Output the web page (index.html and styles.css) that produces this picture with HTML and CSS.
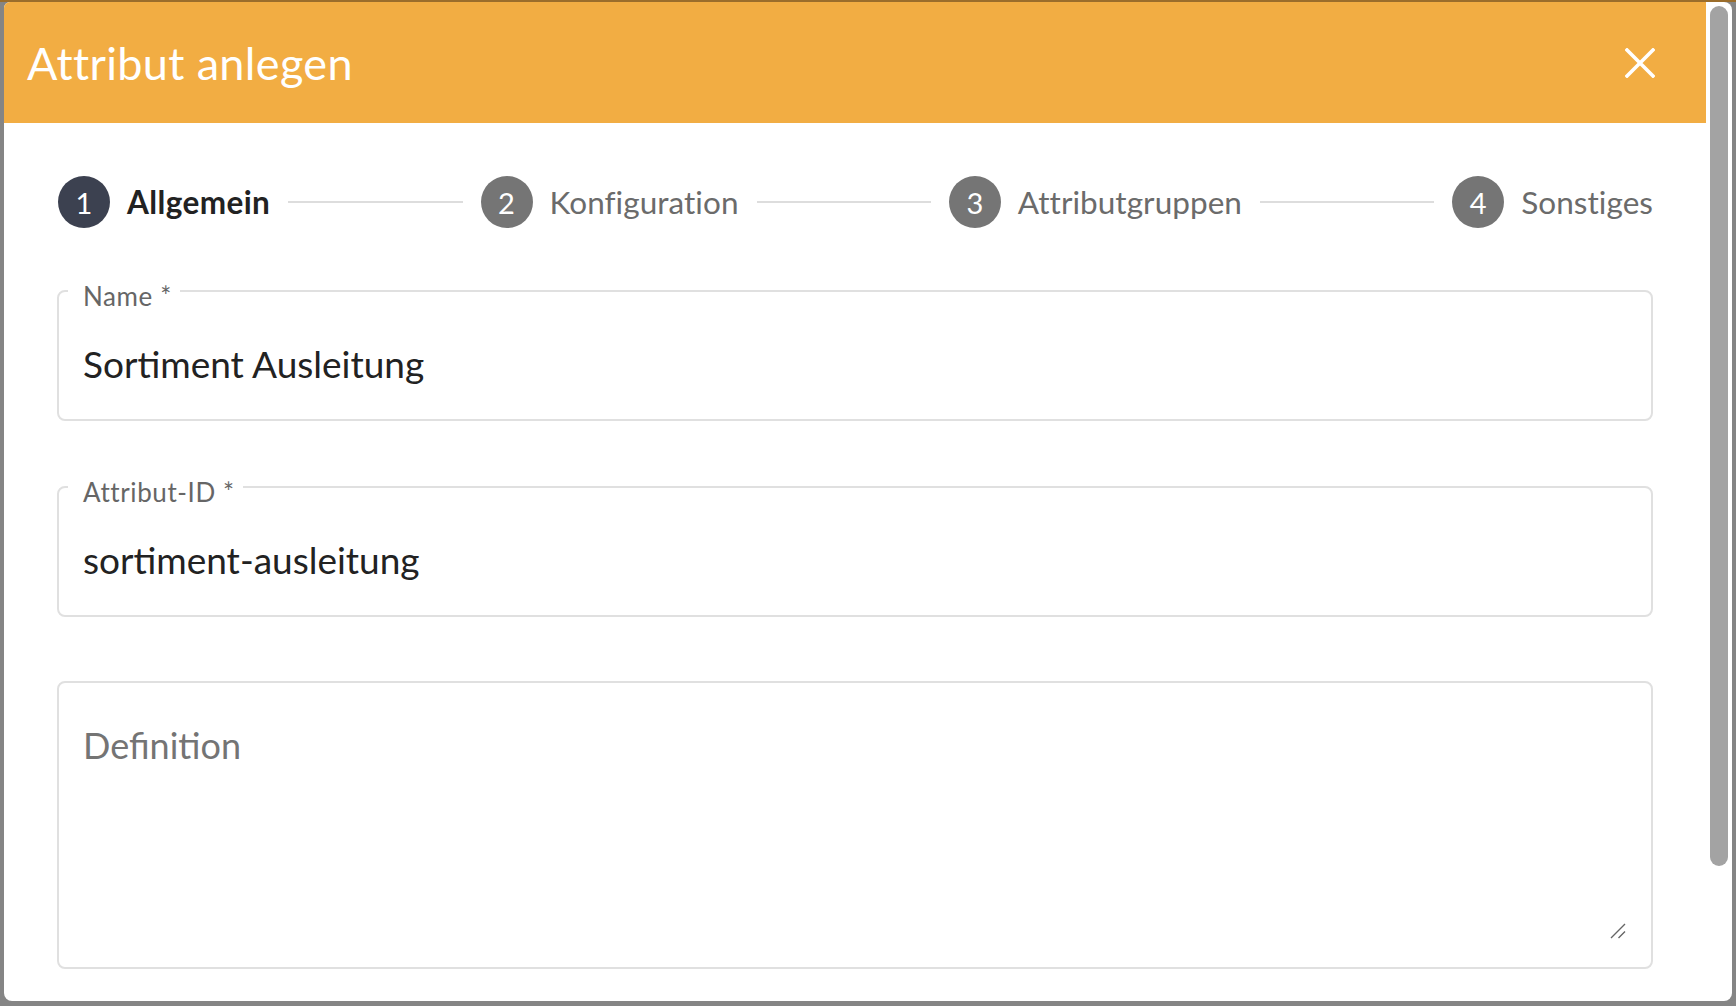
FILE: index.html
```html
<!DOCTYPE html>
<html lang="de">
<head>
<meta charset="utf-8">
<title>Attribut anlegen</title>
<link rel="stylesheet" href="styles.css">
</head>
<body>
<div class="dialog">
  <div class="dialog-main">
    <header class="dialog-header">
      <h1 class="dialog-title">Attribut anlegen</h1>
      <button class="close-btn" aria-label="Schließen">
        <svg width="30" height="30" viewBox="0 0 30 30"><path d="M2 2 L28 28 M28 2 L2 28" stroke="#fff" stroke-width="3.6" stroke-linecap="square" fill="none"/></svg>
      </button>
    </header>
    <div class="dialog-body">
      <div class="stepper">
        <div class="step active"><span class="step-num">1</span><span class="step-label">Allgemein</span></div>
        <div class="connector"></div>
        <div class="step"><span class="step-num">2</span><span class="step-label">Konfiguration</span></div>
        <div class="connector"></div>
        <div class="step"><span class="step-num">3</span><span class="step-label">Attributgruppen</span></div>
        <div class="connector"></div>
        <div class="step"><span class="step-num">4</span><span class="step-label">Sonstiges</span></div>
      </div>
      <fieldset class="field">
        <legend class="field-label">Name *</legend>
        <input class="field-input" type="text" value="Sortiment Ausleitung">
      </fieldset>
      <fieldset class="field">
        <legend class="field-label">Attribut-ID *</legend>
        <input class="field-input" type="text" value="sortiment-ausleitung">
      </fieldset>
      <div class="area">
        <textarea class="area-input" placeholder="Definition"></textarea>
        <svg class="grip" width="16" height="16" viewBox="0 0 16 16"><path d="M1 15 L15 1 M8.5 15 L15 8.5" stroke="#666" stroke-width="1.4" fill="none"/></svg>
      </div>
    </div>
  </div>
  <div class="scroll-track"><div class="scroll-thumb"></div></div>
</div>
</body>
</html>
```
FILE: styles.css
```css
html, body {
  margin: 0;
  padding: 0;
}
body {
  width: 1736px;
  height: 1006px;
  overflow: hidden;
  background: linear-gradient(#9b6d2b 0 2px, #858585 2px);
  font-family: Lato, "Noto Sans", sans-serif;
}
.dialog {
  margin: 2px 4px 0 4px;
  height: 999px;
  background: #fff;
  border-radius: 6px 8px 8px 8px;
  overflow: hidden;
  display: flex;
}
.dialog-main {
  flex: 1;
  min-width: 0;
}
.dialog-header {
  height: 121px;
  background: #f2ad43;
  display: flex;
  align-items: center;
  justify-content: space-between;
  padding: 0 51px 0 23px;
}
.dialog-title {
  margin: 0;
  color: #fff;
  font-size: 45px;
  font-weight: 400;
  letter-spacing: 0.35px;
}
.close-btn {
  background: none;
  border: 0;
  padding: 0;
  width: 30px;
  height: 30px;
  display: flex;
}
.dialog-body {
  padding: 53px 53px 0 53px;
}
.stepper {
  display: flex;
  align-items: center;
  height: 52px;
  padding-left: 1px;
  margin-bottom: 42px;
}
.step {
  display: flex;
  align-items: center;
  gap: 17px;
}
.step-num {
  width: 52px;
  height: 52px;
  border-radius: 50%;
  background: #757575;
  color: #fff;
  font-size: 29px;
  display: flex;
  align-items: center;
  justify-content: center;
}
.step-label {
  font-size: 31.5px;
  letter-spacing: 0.05px;
  color: #6b6b6b;
}
.step.active .step-num {
  background: #3c4150;
}
.step.active .step-label {
  color: #222;
  font-weight: 700;
  letter-spacing: 0.4px;
}
.connector {
  flex: 1;
  height: 2px;
  background: #dddddd;
  margin: 0 18px;
}
.field {
  margin: 0 0 45px 0;
  border: 2px solid #e0e0e0;
  border-radius: 8px;
  padding: 0 24px 29px 24px;
  min-width: 0;
}
.field-label {
  font-size: 26px;
  line-height: 30px;
  letter-spacing: 0.6px;
  color: #666;
  padding: 11px 8px 0 15px;
  margin-left: -15px;
}
.field-input {
  display: block;
  width: 100%;
  border: 0;
  outline: none;
  padding: 0;
  margin: 27px 0 0 0;
  height: 52px;
  line-height: 52px;
  font-family: inherit;
  font-size: 37px;
  color: #222;
  background: transparent;
}
.area {
  position: relative;
  margin-top: 64px;
  border: 2px solid #e0e0e0;
  border-radius: 8px;
  padding: 41px 23px 29px 24px;
  height: 214px;
}
.area-input {
  display: block;
  width: 100%;
  height: 214px;
  border: 0;
  outline: none;
  resize: none;
  padding: 0;
  margin: 0;
  font-family: inherit;
  font-size: 36px;
  line-height: 42px;
  color: #222;
  background: transparent;
  box-sizing: border-box;
}
.area-input::placeholder {
  color: #747474;
}
.grip {
  position: absolute;
  right: 25px;
  bottom: 28px;
}
.scroll-track {
  width: 26px;
  padding: 4px 4px 0 4px;
  box-sizing: border-box;
}
.scroll-thumb {
  height: 860px;
  background: #a3a3a3;
  border-radius: 9px;
}
```
